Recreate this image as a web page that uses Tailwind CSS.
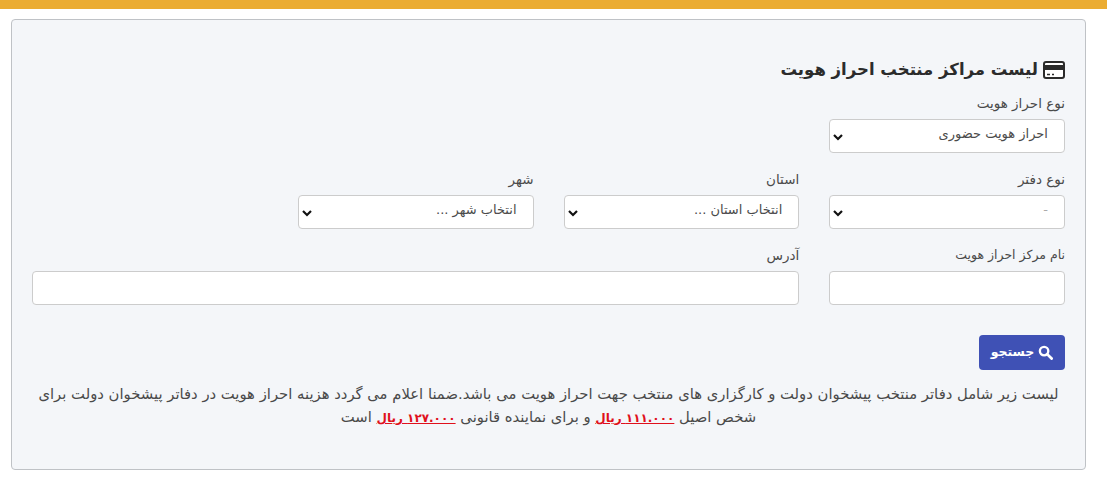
<!DOCTYPE html>
<html lang="fa" dir="rtl">
<head>
    <meta charset="UTF-8">
    <title>لیست مراکز منتخب احراز هویت</title>
    <script src="https://cdn.jsdelivr.net/npm/@tailwindcss/browser@4"></script>
</head>
<body class="bg-white font-['DejaVu_Sans',sans-serif] text-[13.500px] text-[#4a4a4a]">
    <div class="h-[9px] bg-[#ebac32]"></div>

    <div class="mr-[21px] ml-[11px] mt-[10px] h-[451px] rounded border border-[#bfc2c6] bg-[#f4f6f9] px-[20px] pt-[39px]">
        <h2 class="flex h-[22px] items-center gap-[5px] text-[16.500px] font-bold text-[#2b2b2b]">
            <svg class="h-[22px] w-[22px]" viewBox="0 0 22 22" fill="none">
                <rect x="1" y="3" width="20" height="16" rx="2" fill="#fff" stroke="#2b2b2b" stroke-width="2"/>
                <rect x="1" y="6" width="20" height="5" fill="#2b2b2b"/>
                <path d="M4 15.500h3M9 15.500h2" stroke="#2b2b2b" stroke-width="1.500"/>
            </svg>
            لیست مراکز منتخب احراز هویت
        </h2>

        <div class="mt-[13px] grid grid-cols-4 gap-x-[30px]">
            <div>
                <label class="block h-[25px] leading-[18px]">نوع احراز هویت</label>
                <div class="relative">
                    <select class="h-[34px] w-full appearance-none rounded border border-[#ccc] bg-white pr-4 pl-3 pb-1 text-[13px] text-[#4a4a4a]">
                        <option>احراز هویت حضوری</option>
                    </select>
                    <svg class="pointer-events-none absolute bottom-[12px] left-[4px] h-[8px] w-[10px]" viewBox="0 0 10 8" fill="none" stroke="#111" stroke-width="2.200">
                        <path d="M1 2l4 4 4-4"/>
                    </svg>
                </div>
            </div>
        </div>

        <div class="mt-[17px] grid grid-cols-4 gap-x-[30px]">
            <div>
                <label class="block h-[25px] leading-[18px]">نوع دفتر</label>
                <div class="relative">
                    <select class="h-[34px] w-full appearance-none rounded border border-[#ccc] bg-white pr-4 pl-3 pb-1 text-[13px] text-[#aaa]">
                        <option>-</option>
                    </select>
                    <svg class="pointer-events-none absolute bottom-[12px] left-[4px] h-[8px] w-[10px]" viewBox="0 0 10 8" fill="none" stroke="#111" stroke-width="2.200">
                        <path d="M1 2l4 4 4-4"/>
                    </svg>
                </div>
            </div>
            <div>
                <label class="block h-[25px] leading-[18px]">استان</label>
                <div class="relative">
                    <select class="h-[34px] w-full appearance-none rounded border border-[#ccc] bg-white pr-4 pl-3 pb-1 text-[13px] text-[#4a4a4a]">
                        <option>انتخاب استان ...</option>
                    </select>
                    <svg class="pointer-events-none absolute bottom-[12px] left-[4px] h-[8px] w-[10px]" viewBox="0 0 10 8" fill="none" stroke="#111" stroke-width="2.200">
                        <path d="M1 2l4 4 4-4"/>
                    </svg>
                </div>
            </div>
            <div>
                <label class="block h-[25px] leading-[18px]">شهر</label>
                <div class="relative">
                    <select class="h-[34px] w-full appearance-none rounded border border-[#ccc] bg-white pr-4 pl-3 pb-1 text-[13px] text-[#4a4a4a]">
                        <option>انتخاب شهر ...</option>
                    </select>
                    <svg class="pointer-events-none absolute bottom-[12px] left-[4px] h-[8px] w-[10px]" viewBox="0 0 10 8" fill="none" stroke="#111" stroke-width="2.200">
                        <path d="M1 2l4 4 4-4"/>
                    </svg>
                </div>
            </div>
        </div>

        <div class="mt-[17px] grid grid-cols-4 gap-x-[30px]">
            <div>
                <label class="block h-[25px] text-[12.500px] leading-[18px]">نام مرکز احراز هویت</label>
                <input type="text" class="h-[34px] w-full rounded border border-[#ccc] bg-white px-3">
            </div>
            <div class="col-span-3">
                <label class="block h-[25px] leading-[18px]">آدرس</label>
                <input type="text" class="h-[34px] w-full rounded border border-[#ccc] bg-white px-3">
            </div>
        </div>

        <button class="mt-[30px] flex h-[35px] w-[86px] items-center justify-center gap-1 rounded bg-[#3f51b5] text-[12.500px] font-bold text-white">
            <svg class="h-[15px] w-[15px]" viewBox="0 0 16 16" fill="none" stroke="#fff">
                <circle cx="6.500" cy="6.500" r="4.500" stroke-width="2.500"/>
                <path d="M10 10l4.500 4.500" stroke-width="3" stroke-linecap="round"/>
            </svg>
            جستجو
        </button>

        <p class="mt-[12px] text-center text-[14.800px] leading-[23px] text-[#4a4a4a]">
            لیست زیر شامل دفاتر منتخب پیشخوان دولت و کارگزاری های منتخب جهت احراز هویت می باشد.ضمنا اعلام می گردد هزینه احراز هویت در دفاتر پیشخوان دولت برای شخص اصیل
            <b class="text-[12px] text-[#e0101c] underline">۱۱۱.۰۰۰ ریال</b>
            و برای نماینده قانونی
            <b class="text-[12px] text-[#e0101c] underline">۱۲۷.۰۰۰ ریال</b>
            است
        </p>
    </div>
</body>
</html>
